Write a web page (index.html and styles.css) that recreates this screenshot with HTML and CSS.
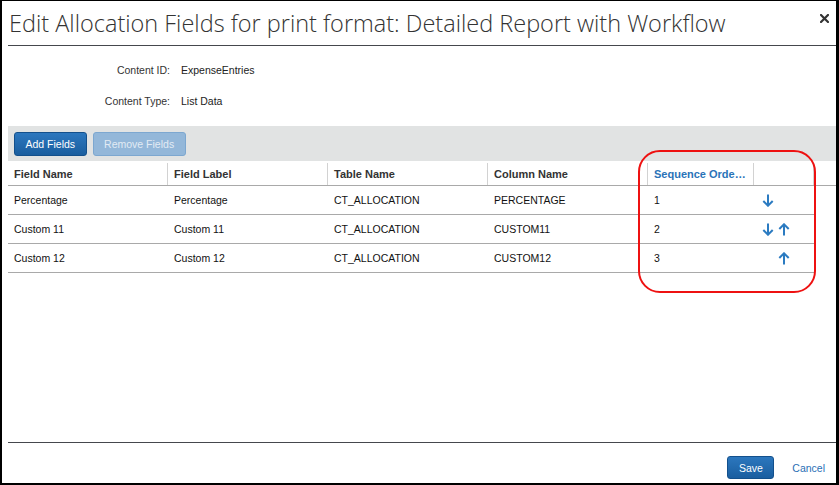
FILE: index.html
```html
<!DOCTYPE html>
<html>
<head>
<meta charset="utf-8">
<link rel="stylesheet" href="styles.css">
</head>
<body>
<div class="window">
  <div class="header">
    <h1 class="title">Edit Allocation Fields for print format: Detailed Report with Workflow</h1>
    <svg class="close" width="9" height="9" viewBox="0 0 9 9"><path d="M1 1 L8 8 M8 1 L1 8" stroke="#333" stroke-width="2.2" stroke-linecap="square"/></svg>
  </div>
  <div class="main">
    <div class="info">
      <div class="info-label">Content ID:</div><div class="info-value">ExpenseEntries</div>
      <div class="info-label">Content Type:</div><div class="info-value">List Data</div>
    </div>
    <div class="toolbar">
      <button class="btn btn-primary">Add Fields</button>
      <button class="btn btn-disabled">Remove Fields</button>
    </div>
    <div class="grid">
      <div class="grid-head">
        <div class="hcell">Field Name</div>
        <div class="hcell">Field Label</div>
        <div class="hcell">Table Name</div>
        <div class="hcell">Column Name</div>
        <div class="hcell sorted">Sequence Order Number</div>
        <div class="hcell"></div>
        <div class="hfill"></div>
      </div>
      <div class="row">
        <div class="cell">Percentage</div>
        <div class="cell">Percentage</div>
        <div class="cell">CT_ALLOCATION</div>
        <div class="cell">PERCENTAGE</div>
        <div class="cell">1</div>
        <div class="cell moves">
          <svg class="arrow" width="12" height="13" viewBox="0 0 12 13"><path d="M6 0.5 V11.5 M1.3 7 L6 11.7 L10.7 7" fill="none" stroke="#2b7bc1" stroke-width="2"/></svg>
          <span class="slot"></span>
        </div>
      </div>
      <div class="row">
        <div class="cell">Custom 11</div>
        <div class="cell">Custom 11</div>
        <div class="cell">CT_ALLOCATION</div>
        <div class="cell">CUSTOM11</div>
        <div class="cell">2</div>
        <div class="cell moves">
          <svg class="arrow" width="12" height="13" viewBox="0 0 12 13"><path d="M6 0.5 V11.5 M1.3 7 L6 11.7 L10.7 7" fill="none" stroke="#2b7bc1" stroke-width="2"/></svg>
          <svg class="arrow" width="12" height="13" viewBox="0 0 12 13"><path d="M6 12.5 V1.5 M1.3 6 L6 1.3 L10.7 6" fill="none" stroke="#2b7bc1" stroke-width="2"/></svg>
        </div>
      </div>
      <div class="row">
        <div class="cell">Custom 12</div>
        <div class="cell">Custom 12</div>
        <div class="cell">CT_ALLOCATION</div>
        <div class="cell">CUSTOM12</div>
        <div class="cell">3</div>
        <div class="cell moves">
          <span class="slot"></span>
          <svg class="arrow" width="12" height="13" viewBox="0 0 12 13"><path d="M6 12.5 V1.5 M1.3 6 L6 1.3 L10.7 6" fill="none" stroke="#2b7bc1" stroke-width="2"/></svg>
        </div>
      </div>
    </div>
  </div>
  <div class="footer">
    <button class="btn btn-primary">Save</button>
    <a class="link" href="#">Cancel</a>
  </div>
  <div class="highlight"></div>
</div>
</body>
</html>
```

FILE: styles.css
```css
* { box-sizing: border-box; }
html, body { margin: 0; padding: 0; background: #fff; }
body {
  font-family: "Liberation Sans", Arial, sans-serif;
  font-size: 10.5px;
  color: #222;
}
.window {
  position: relative;
  width: 839px;
  height: 485px;
  border-style: solid;
  border-color: #000;
  border-width: 1px 3px 2px 2px;
  padding-left: 6px;
  display: flex;
  flex-direction: column;
  overflow: hidden;
}
.header {
  display: flex;
  justify-content: space-between;
  align-items: flex-start;
  padding-top: 7px;
  padding-bottom: 7px;
  border-bottom: 1px solid #45484d;
}
.title {
  margin: 0 0 0 1px;
  font-family: "Open Sans", sans-serif;
  font-weight: 300;
  font-size: 23.5px;
  line-height: 30px;
  color: #333;
  white-space: nowrap;
}
.close {
  margin-top: 6px;
  margin-right: 7px;
  flex: none;
}
.main { flex: 1; }
.info {
  display: grid;
  grid-template-columns: 162px 1fr;
  grid-auto-rows: 31px;
  column-gap: 11px;
  align-items: center;
  padding: 8px 0 10px;
  color: #333;
}
.info-label { text-align: right; }
.info-value { color: #222; }
.toolbar {
  display: flex;
  gap: 6px;
  height: 35px;
  padding: 6px;
  background: #e1e3e3;
}
.btn {
  font-family: "Liberation Sans", Arial, sans-serif;
  font-size: 10.5px;
  height: 24px;
  padding: 0 10.5px;
  border-radius: 3px;
  border: 1px solid;
  cursor: pointer;
}
.btn-primary {
  color: #fff;
  background: linear-gradient(#2c77be, #1a5e9f);
  border-color: #13508c;
}
.btn-disabled {
  color: #e2ebf4;
  background: #93b7d9;
  border-color: #7ca7d0;
}
.grid-head {
  display: grid;
  grid-template-columns: 160px 160px 160px 160px 106px 60px 1fr;
  padding-top: 2px;
  border-bottom: 1px solid #a9a9a9;
}
.hcell {
  height: 22px;
  line-height: 22px;
  padding-left: 6px;
  border-right: 1px solid #d2d2d2;
  font-size: 11px;
  font-weight: bold;
  color: #333;
  white-space: nowrap;
  overflow: hidden;
  text-overflow: ellipsis;
}
.hcell.sorted { color: #2a73b8; padding-right: 5px; }
.row {
  display: grid;
  grid-template-columns: 160px 160px 160px 160px 106px 60px;
  width: 806px;
  height: 29px;
  border-bottom: 1px solid #a9a9a9;
  align-items: center;
}
.cell {
  padding-left: 6px;
  color: #111;
  white-space: nowrap;
}
.moves {
  display: flex;
  gap: 4px;
  padding-left: 8px;
  align-items: center;
  padding-top: 1px;
}
.slot { width: 12px; height: 13px; display: block; }
.arrow { display: block; }
.footer {
  display: flex;
  justify-content: flex-end;
  align-items: center;
  gap: 18px;
  border-top: 1px solid #45484d;
  padding: 13px 11px 4px 0;
}
.footer .btn { height: 23px; }
.link {
  color: #2a6fb5;
  text-decoration: none;
  font-size: 10.5px;
}
.highlight {
  position: absolute;
  left: 636px;
  top: 149px;
  width: 178px;
  height: 143px;
  border: 2px solid #ee1111;
  border-radius: 22px;
  pointer-events: none;
}
```
